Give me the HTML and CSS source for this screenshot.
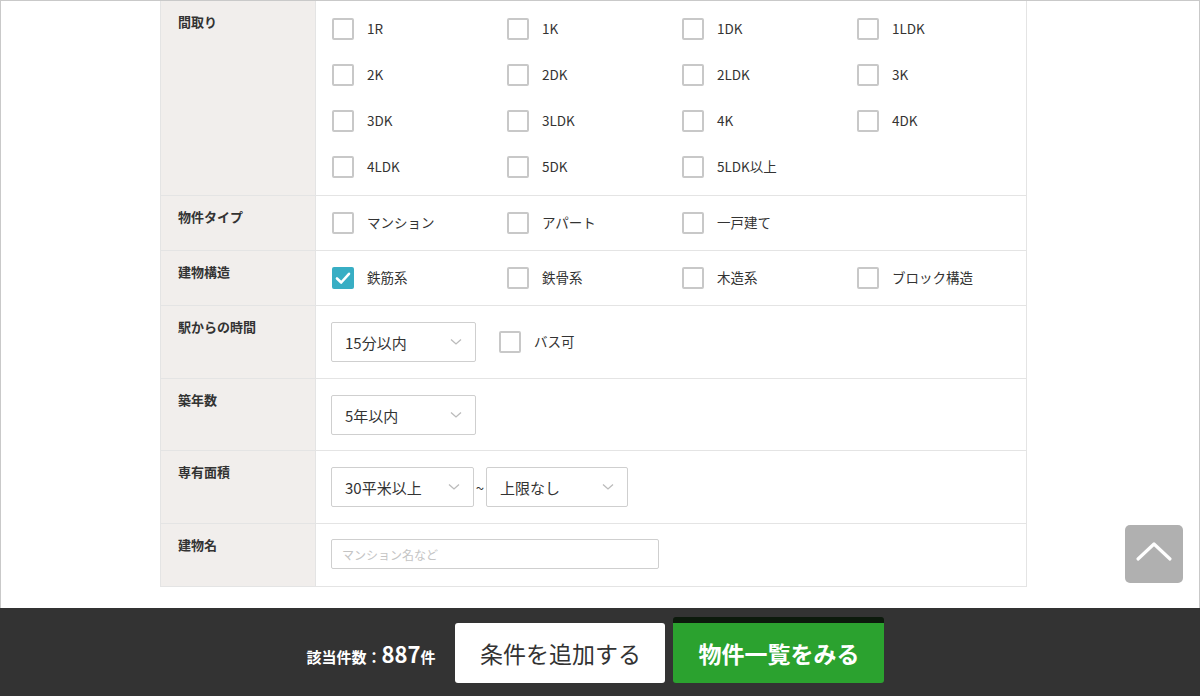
FILE: index.html
```html
<!DOCTYPE html>
<html lang="ja">
<head>
<meta charset="utf-8">
<link rel="stylesheet" href="styles.css">
</head>
<body>
<div class="frame">
  <div class="table">
    <div class="row">
      <div class="label">間取り</div>
      <div class="cell cell-grid cell-first">
        <div class="grid">
          <label class="cb"><span class="box"></span>1R</label>
          <label class="cb"><span class="box"></span>1K</label>
          <label class="cb"><span class="box"></span>1DK</label>
          <label class="cb"><span class="box"></span>1LDK</label>
          <label class="cb"><span class="box"></span>2K</label>
          <label class="cb"><span class="box"></span>2DK</label>
          <label class="cb"><span class="box"></span>2LDK</label>
          <label class="cb"><span class="box"></span>3K</label>
          <label class="cb"><span class="box"></span>3DK</label>
          <label class="cb"><span class="box"></span>3LDK</label>
          <label class="cb"><span class="box"></span>4K</label>
          <label class="cb"><span class="box"></span>4DK</label>
          <label class="cb"><span class="box"></span>4LDK</label>
          <label class="cb"><span class="box"></span>5DK</label>
          <label class="cb"><span class="box"></span>5LDK以上</label>
        </div>
      </div>
    </div>
    <div class="row">
      <div class="label">物件タイプ</div>
      <div class="cell cell-grid">
        <div class="grid">
          <label class="cb"><span class="box"></span>マンション</label>
          <label class="cb"><span class="box"></span>アパート</label>
          <label class="cb"><span class="box"></span>一戸建て</label>
        </div>
      </div>
    </div>
    <div class="row">
      <div class="label">建物構造</div>
      <div class="cell cell-grid">
        <div class="grid">
          <label class="cb"><span class="box checked"><svg viewBox="0 0 22 22" width="22" height="22"><path d="M5 11.5 L9.2 15.5 L17 6.8" fill="none" stroke="#fff" stroke-width="2.6" stroke-linecap="round" stroke-linejoin="round"/></svg></span>鉄筋系</label>
          <label class="cb"><span class="box"></span>鉄骨系</label>
          <label class="cb"><span class="box"></span>木造系</label>
          <label class="cb"><span class="box"></span>ブロック構造</label>
        </div>
      </div>
    </div>
    <div class="row">
      <div class="label">駅からの時間</div>
      <div class="cell cell-form">
        <div class="select w145">15分以内<svg class="chev" viewBox="0 0 12 8" width="12" height="8"><path d="M1 1.5 L6 6 L11 1.5" fill="none" stroke="#bbb" stroke-width="1.3"/></svg></div>
        <label class="cb cb-inline"><span class="box"></span>バス可</label>
      </div>
    </div>
    <div class="row">
      <div class="label">築年数</div>
      <div class="cell cell-form cell-tight">
        <div class="select w145">5年以内<svg class="chev" viewBox="0 0 12 8" width="12" height="8"><path d="M1 1.5 L6 6 L11 1.5" fill="none" stroke="#bbb" stroke-width="1.3"/></svg></div>
      </div>
    </div>
    <div class="row">
      <div class="label">専有面積</div>
      <div class="cell cell-form">
        <div class="select w143">30平米以上<svg class="chev" viewBox="0 0 12 8" width="12" height="8"><path d="M1 1.5 L6 6 L11 1.5" fill="none" stroke="#bbb" stroke-width="1.3"/></svg></div>
        <span class="tilde">~</span>
        <div class="select w142">上限なし<svg class="chev" viewBox="0 0 12 8" width="12" height="8"><path d="M1 1.5 L6 6 L11 1.5" fill="none" stroke="#bbb" stroke-width="1.3"/></svg></div>
      </div>
    </div>
    <div class="row">
      <div class="label">建物名</div>
      <div class="cell cell-input">
        <div class="text-input">マンション名など</div>
      </div>
    </div>
  </div>

  <div class="pagetop"><svg viewBox="0 0 58 58" width="58" height="58"><path d="M13 34 L29 19 L45 34" fill="none" stroke="#fff" stroke-width="3.2" stroke-linecap="round" stroke-linejoin="round"/></svg></div>
</div>

<div class="bar">
  <div class="count">該当件数：<span class="num">887</span>件</div>
  <div class="btn btn-add">条件を追加する</div>
  <div class="btn btn-list">物件一覧をみる</div>
</div>
</body>
</html>
```

FILE: styles.css
```css
* { box-sizing: border-box; }
html, body { margin: 0; padding: 0; }
body {
  width: 1200px;
  height: 696px;
  overflow: hidden;
  background: #fff;
  font-family: "Noto Sans CJK JP", "Noto Sans", sans-serif;
  color: #333;
  position: relative;
}
.frame {
  height: 608px;
  border-top: 1px solid #c9c9c9;
  border-left: 1px solid #c9c9c9;
  border-right: 1px solid #c9c9c9;
  padding-left: 159px;
  position: relative;
}
.table {
  width: 867px;
  border-left: 1px solid #e4e4e4;
  border-right: 1px solid #e4e4e4;
}
.row {
  display: grid;
  grid-template-columns: 155px 1fr;
  border-bottom: 1px solid #e4e4e4;
}
.label {
  background: #f1eeec;
  border-right: 1px solid #e4e4e4;
  font-size: 13px;
  font-weight: bold;
  line-height: 20px;
  padding: 11px 0 0 17px;
  color: #333;
}
.cell-grid { padding: 4px 0 4px 16px; }
.cell-first { padding: 5px 0 5px 16px; }
.grid {
  display: grid;
  grid-template-columns: repeat(4, 175px);
  grid-auto-rows: 46px;
}
.cb {
  display: flex;
  align-items: center;
  font-size: 13.5px;
  color: #333;
  line-height: 1;
}
.box {
  width: 22px;
  height: 22px;
  border: 2px solid #c8c8c8;
  border-radius: 2px;
  margin-right: 13px;
  flex: none;
  background: #fff;
}
.box.checked {
  background: #38aec4;
  border: none;
  display: flex;
}
.cell-form {
  display: flex;
  align-items: center;
  padding: 16px 0 16px 15px;
}
.cell-tight { padding-bottom: 15px; }
.select {
  height: 40px;
  border: 1px solid #cfcfcf;
  border-radius: 2px;
  font-size: 15px;
  color: #333;
  display: flex;
  align-items: center;
  justify-content: space-between;
  padding: 0 13px 0 13px;
  background: #fff;
}
.w145 { width: 145px; }
.w143 { width: 143px; }
.w142 { width: 142px; }
.chev { flex: none; }
.cb-inline { margin-left: 23px; }
.tilde {
  font-size: 15px;
  width: 12px;
  text-align: center;
  color: #333;
}
.cell-input { padding: 15px 0 17px 15px; }
.text-input {
  width: 328px;
  height: 30px;
  border: 1px solid #cfcfcf;
  border-radius: 2px;
  font-size: 12px;
  color: #c4c4c4;
  display: flex;
  align-items: center;
  padding-left: 10px;
}
.pagetop {
  position: absolute;
  left: 1124px;
  top: 524px;
  width: 58px;
  height: 58px;
  background: #b0b0b0;
  border-radius: 5px;
  display: flex;
}
.bar {
  height: 88px;
  background: #333;
  display: flex;
  justify-content: center;
  align-items: flex-end;
  padding: 0 9px 13px 0;
}
.count {
  color: #fff;
  font-size: 15px;
  font-weight: bold;
  margin-right: 20px;
  align-self: flex-end;
  padding-bottom: 15px;
  line-height: 22px;
}
.count .num { font-size: 22px; }
.btn {
  border-radius: 3px;
  display: flex;
  align-items: center;
  justify-content: center;
  font-size: 23px;
}
.btn-add {
  width: 210px;
  height: 60px;
  background: #fff;
  color: #333;
  margin-right: 8px;
}
.btn-list {
  width: 211px;
  height: 66px;
  background: #2ba22f;
  border-top: 6px solid #0c1a0c;
  color: #fff;
  font-weight: bold;
}
```
